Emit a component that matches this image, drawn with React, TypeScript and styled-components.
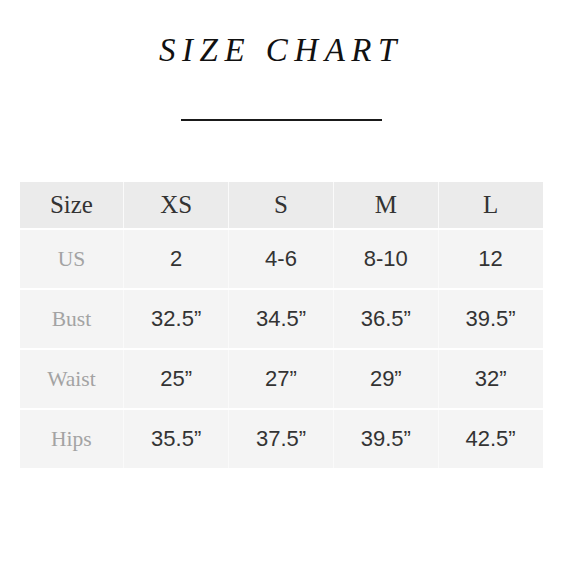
import styled, { createGlobalStyle } from "styled-components";

const GlobalStyle = createGlobalStyle`
  html, body {
    margin: 0;
    padding: 0;
    background: #ffffff;
  }
`;

const Page = styled.div`
  width: 580px;
  height: 580px;
  box-sizing: border-box;
  padding-right: 18px;
  display: flex;
  flex-direction: column;
  align-items: center;
`;

const Title = styled.h1`
  margin: 34px 0 0;
  font-family: "Liberation Serif", "Times New Roman", serif;
  font-style: italic;
  font-weight: normal;
  font-size: 33px;
  line-height: 33px;
  letter-spacing: 6.5px;
  color: #111;
`;

const Rule = styled.div`
  width: 201px;
  height: 2px;
  margin-top: 52px;
  background: #1a1a1a;
`;

const Table = styled.div`
  width: 523px;
  margin-top: 61px;
  display: flex;
  flex-direction: column;
  gap: 2px;
`;

const Row = styled.div<{ $head?: boolean }>`
  display: grid;
  grid-template-columns: repeat(5, 1fr);
  column-gap: 1px;
  height: ${(p) => (p.$head ? "46px" : "58px")};
  background: #fafafa;
`;

const Cell = styled.div<{ $head?: boolean; $label?: boolean }>`
  display: flex;
  align-items: center;
  justify-content: center;
  background: ${(p) => (p.$head ? "#ebebeb" : "#f4f4f4")};
  font-family: ${(p) =>
    p.$head || p.$label
      ? `"Liberation Serif", "Times New Roman", serif`
      : `"Liberation Sans", Arial, sans-serif`};
  font-size: ${(p) => (p.$head ? "25px" : p.$label ? "21.5px" : "22px")};
  color: ${(p) => (p.$label ? "#a3a3a3" : "#333333")};
`;

const header = ["Size", "XS", "S", "M", "L"];

const rows: [string, string[]][] = [
  ["US", ["2", "4-6", "8-10", "12"]],
  ["Bust", ["32.5\u201d", "34.5\u201d", "36.5\u201d", "39.5\u201d"]],
  ["Waist", ["25\u201d", "27\u201d", "29\u201d", "32\u201d"]],
  ["Hips", ["35.5\u201d", "37.5\u201d", "39.5\u201d", "42.5\u201d"]],
];

const App = () => {
  return (
    <Page>
      <GlobalStyle />
      <Title>SIZE CHART</Title>
      <Rule />
      <Table>
        <Row $head>
          {header.map((h) => (
            <Cell $head key={h}>
              {h}
            </Cell>
          ))}
        </Row>
        {rows.map(([label, values]) => (
          <Row key={label}>
            <Cell $label>{label}</Cell>
            {values.map((v, i) => (
              <Cell key={i}>{v}</Cell>
            ))}
          </Row>
        ))}
      </Table>
    </Page>
  );
};

export default App;
